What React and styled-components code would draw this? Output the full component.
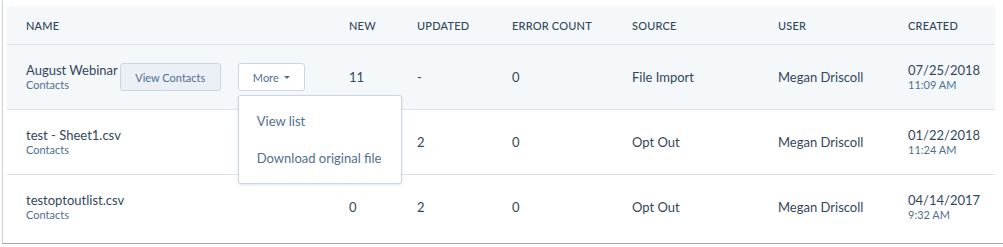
import React from "react";
import styled, { createGlobalStyle } from "styled-components";

const GlobalStyle = createGlobalStyle`
  html, body {
    margin: 0;
    padding: 0;
    background: #fff;
  }
  body {
    font-family: "Lato", "Noto Sans", sans-serif;
    color: #33475b;
  }
`;

const columns = "323px 68px 95px 120px 146px 130px 106px";

const Frame = styled.div`
  margin-left: 2px;
  width: 994px;
  padding: 6px 2px 4px 4px;
  border-left: 1px solid #d4d4d4;
  border-right: 1px solid #c4c4c4;
  border-bottom: 1px solid #a8a8a8;
  box-shadow: 1px 1px 2px rgba(0, 0, 0, 0.35);
`;

const Table = styled.div`
  width: 988px;
`;

const Row = styled.div`
  display: grid;
  grid-template-columns: ${columns};
  align-items: center;
  height: ${(p) => (p.$head ? "38px" : "64px")};
  background: ${(p) => (p.$shaded ? "#f5f8fa" : "#fff")};
  border-bottom: ${(p) => (p.$last ? "none" : "1px solid #dfe3eb")};
`;

const HeadCell = styled.div`
  padding-left: 19px;
  font-size: 11px;
  font-weight: 500;
  letter-spacing: 0.2px;
  text-transform: uppercase;
  color: #33475b;
`;

const Cell = styled.div`
  padding-left: 19px;
  font-size: 13px;
  color: #33475b;
`;

const NameCell = styled.div`
  position: relative;
  display: flex;
  align-items: center;
  padding-left: 19px;
`;

const NameBlock = styled.div`
  display: flex;
  flex-direction: column;
`;

const Title = styled.span`
  font-size: 13px;
  line-height: 16px;
  color: #33475b;
`;

const Sub = styled.span`
  font-size: 11px;
  line-height: 14px;
  color: #516f90;
`;

const Button = styled.button`
  display: inline-flex;
  align-items: center;
  justify-content: center;
  gap: 5px;
  height: 28px;
  width: ${(p) => p.$w}px;
  margin-left: ${(p) => p.$ml}px;
  padding: 0;
  font-family: inherit;
  font-size: 11px;
  color: #506e91;
  background: ${(p) => (p.$secondary ? "#eaf0f6" : "#fff")};
  border: 1px solid #cbd6e2;
  border-radius: 3px;
`;

const MoreWrap = styled.div`
  position: relative;
`;

const Caret = styled.span`
  width: 0;
  height: 0;
  margin-top: 1px;
  border-left: 3px solid transparent;
  border-right: 3px solid transparent;
  border-top: 3px solid #506e91;
`;

const Menu = styled.div`
  position: absolute;
  top: 32px;
  left: 17px;
  width: 162px;
  padding: 6px 0 7px;
  background: #fff;
  border: 1px solid #cbd6e2;
  border-radius: 3px;
  box-shadow: 0 1px 3px rgba(45, 62, 80, 0.12);
  z-index: 5;
`;

const MenuItem = styled.div`
  padding: 0 18px;
  height: 37px;
  display: flex;
  align-items: center;
  font-size: 13px;
  color: #516f90;
  white-space: nowrap;
`;

const DateBlock = styled.div`
  display: flex;
  flex-direction: column;
  padding-left: 19px;
`;

const rows = [
  { name: "August Webinar", new: "11", updated: "-", errors: "0", source: "File Import", user: "Megan Driscoll", date: "07/25/2018", time: "11:09 AM", active: true },
  { name: "test - Sheet1.csv", new: "", updated: "2", errors: "0", source: "Opt Out", user: "Megan Driscoll", date: "01/22/2018", time: "11:24 AM" },
  { name: "testoptoutlist.csv", new: "0", updated: "2", errors: "0", source: "Opt Out", user: "Megan Driscoll", date: "04/14/2017", time: "9:32 AM" },
];

const headers = ["Name", "New", "Updated", "Error count", "Source", "User", "Created"];

export default function App() {
  return (
    <>
      <GlobalStyle />
      <Frame>
        <Table>
          <Row $head $shaded>
            {headers.map((h) => (
              <HeadCell key={h}>{h}</HeadCell>
            ))}
          </Row>
          {rows.map((r, i) => (
            <Row key={r.name} $shaded={r.active} $last={i === rows.length - 1}>
              <NameCell>
                <NameBlock>
                  <Title>{r.name}</Title>
                  <Sub>Contacts</Sub>
                </NameBlock>
                {r.active && (
                  <>
                    <Button $secondary $w={101} $ml={2}>View Contacts</Button>
                    <MoreWrap>
                      <Button $w={67} $ml={17}>
                        More <Caret />
                      </Button>
                      <Menu>
                        <MenuItem>View list</MenuItem>
                        <MenuItem>Download original file</MenuItem>
                      </Menu>
                    </MoreWrap>
                  </>
                )}
              </NameCell>
              <Cell>{r.new}</Cell>
              <Cell>{r.updated}</Cell>
              <Cell>{r.errors}</Cell>
              <Cell>{r.source}</Cell>
              <Cell>{r.user}</Cell>
              <DateBlock>
                <Title>{r.date}</Title>
                <Sub>{r.time}</Sub>
              </DateBlock>
            </Row>
          ))}
        </Table>
      </Frame>
    </>
  );
}
